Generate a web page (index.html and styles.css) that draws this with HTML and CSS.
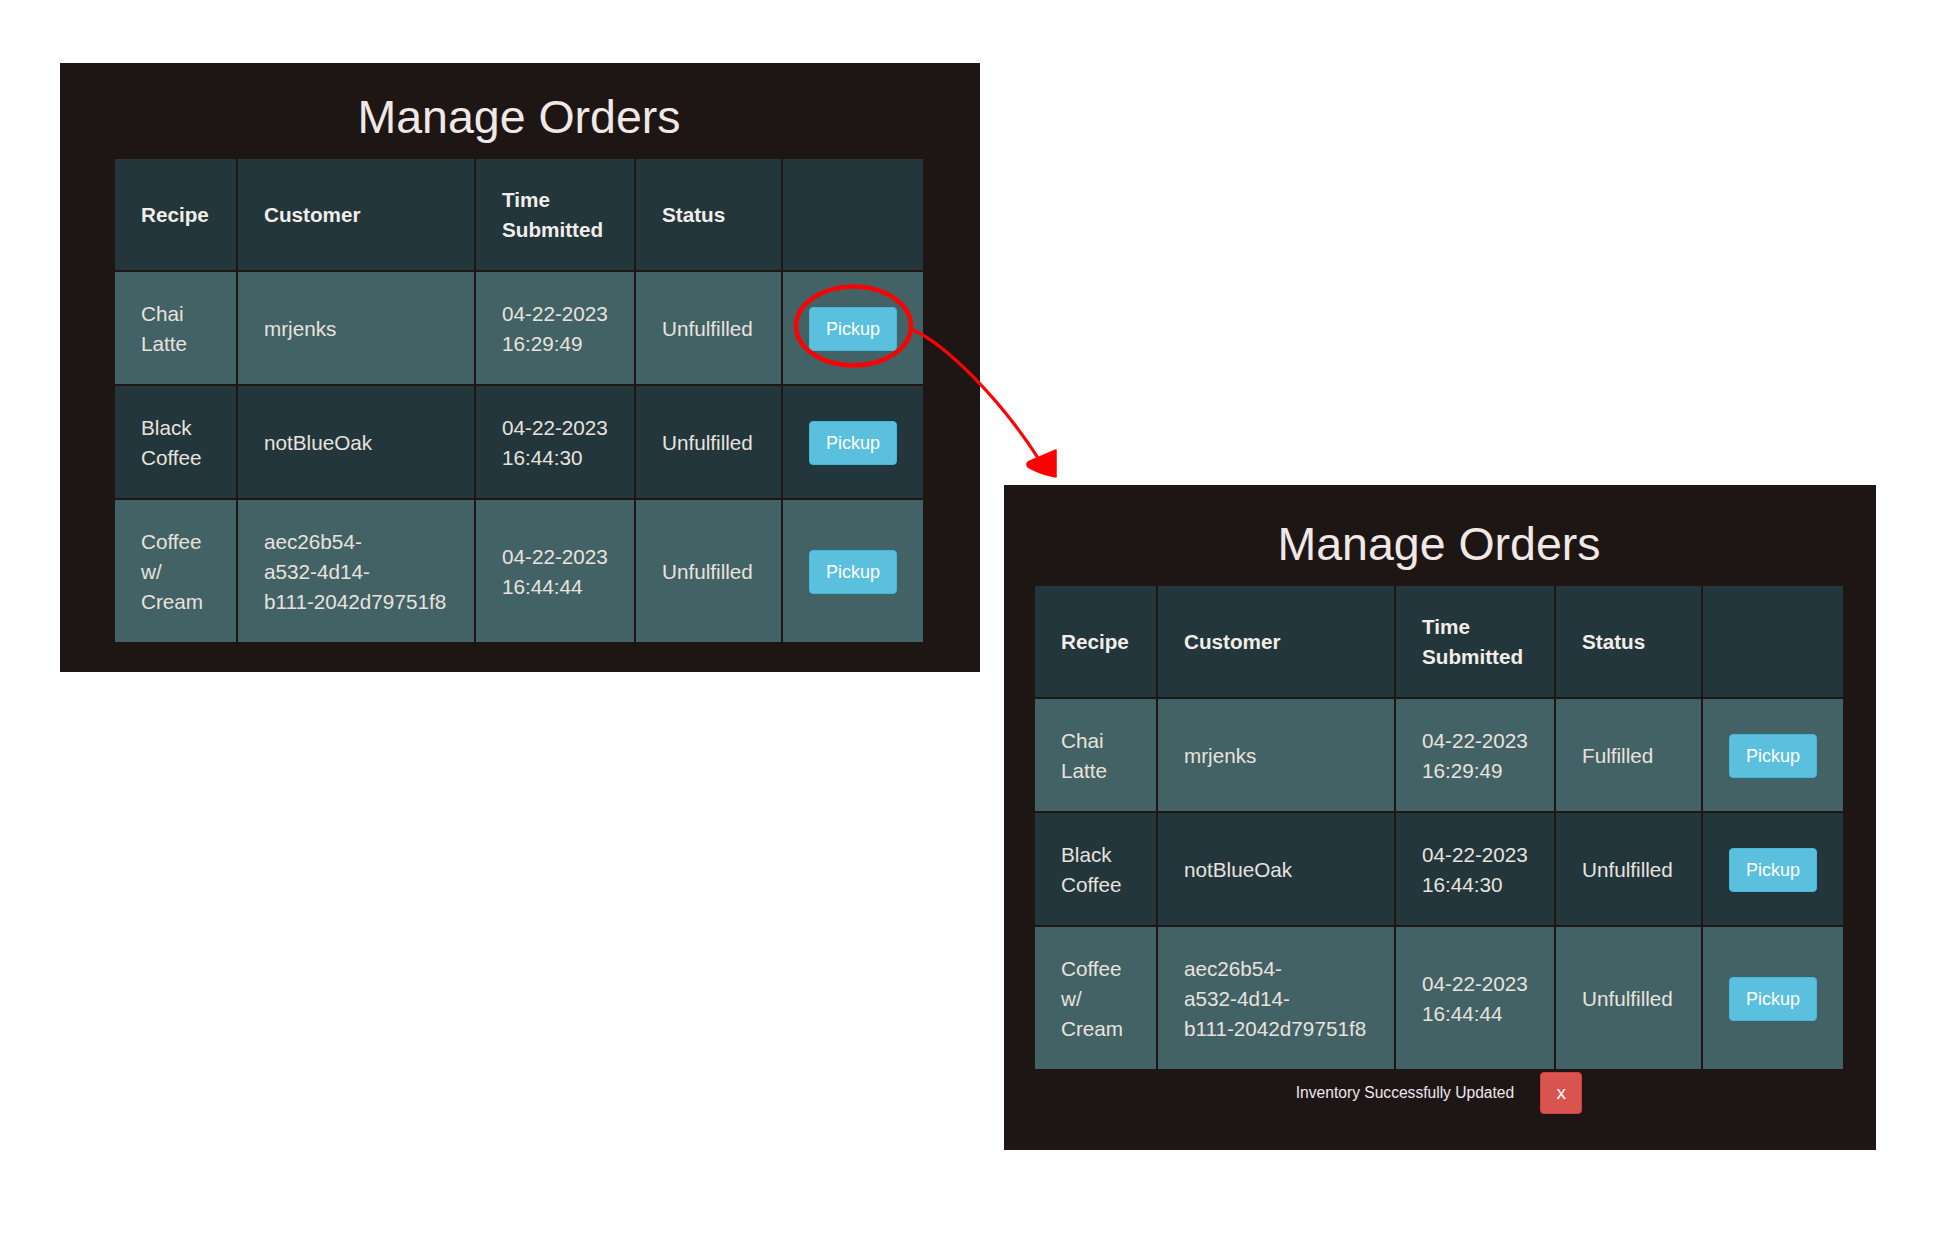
FILE: index.html
```html
<!DOCTYPE html>
<html lang="en">
<head>
<meta charset="utf-8">
<title>Manage Orders</title>
<link rel="stylesheet" href="styles.css">
</head>
<body>
<div class="canvas">
  <section class="panel panel-before">
    <h1 class="title">Manage Orders</h1>
    <table class="orders">
      <colgroup>
        <col class="c-recipe"><col class="c-customer"><col class="c-time"><col class="c-status"><col class="c-action">
      </colgroup>
      <thead>
        <tr><th>Recipe</th><th>Customer</th><th>Time Submitted</th><th>Status</th><th></th></tr>
      </thead>
      <tbody>
        <tr class="light"><td>Chai Latte</td><td>mrjenks</td><td><span class="nobr">04-22-2023</span> <span class="nobr">16:29:49</span></td><td>Unfulfilled</td><td><button class="btn-pickup">Pickup</button></td></tr>
        <tr class="dark"><td>Black Coffee</td><td>notBlueOak</td><td><span class="nobr">04-22-2023</span> <span class="nobr">16:44:30</span></td><td>Unfulfilled</td><td><button class="btn-pickup">Pickup</button></td></tr>
        <tr class="light"><td>Coffee w/ Cream</td><td><span class="nobr">aec26b54-</span><span class="nobr">a532-4d14-</span><span class="nobr">b111-2042d79751f8</span></td><td><span class="nobr">04-22-2023</span> <span class="nobr">16:44:44</span></td><td>Unfulfilled</td><td><button class="btn-pickup">Pickup</button></td></tr>
      </tbody>
    </table>
  </section>

  <section class="panel panel-after">
    <h1 class="title">Manage Orders</h1>
    <table class="orders">
      <colgroup>
        <col class="c-recipe"><col class="c-customer"><col class="c-time"><col class="c-status"><col class="c-action">
      </colgroup>
      <thead>
        <tr><th>Recipe</th><th>Customer</th><th>Time Submitted</th><th>Status</th><th></th></tr>
      </thead>
      <tbody>
        <tr class="light"><td>Chai Latte</td><td>mrjenks</td><td><span class="nobr">04-22-2023</span> <span class="nobr">16:29:49</span></td><td>Fulfilled</td><td><button class="btn-pickup">Pickup</button></td></tr>
        <tr class="dark"><td>Black Coffee</td><td>notBlueOak</td><td><span class="nobr">04-22-2023</span> <span class="nobr">16:44:30</span></td><td>Unfulfilled</td><td><button class="btn-pickup">Pickup</button></td></tr>
        <tr class="light"><td>Coffee w/ Cream</td><td><span class="nobr">aec26b54-</span><span class="nobr">a532-4d14-</span><span class="nobr">b111-2042d79751f8</span></td><td><span class="nobr">04-22-2023</span> <span class="nobr">16:44:44</span></td><td>Unfulfilled</td><td><button class="btn-pickup">Pickup</button></td></tr>
      </tbody>
    </table>
    <div class="alert">
      <span class="alert-text">Inventory Successfully Updated</span>
      <button class="btn-close">x</button>
    </div>
  </section>
</div>

<svg class="annotation" width="1934" height="1237" viewBox="0 0 1934 1237" xmlns="http://www.w3.org/2000/svg">
  <ellipse cx="853.5" cy="326" rx="57.5" ry="39.5" fill="none" stroke="#ff0000" stroke-width="4.5"/>
  <path d="M913,330 C945,344 1000,398 1040,461" fill="none" stroke="#ff0000" stroke-width="3.2"/>
  <path d="M1056,450 L1056,477 Q1040,474 1028,467 Q1025,463 1030,461 Z" fill="#ff0000" stroke="#ff0000" stroke-width="1.5" stroke-linejoin="round"/>
</svg>
</body>
</html>
```

FILE: styles.css
```css
html, body {
  margin: 0;
  padding: 0;
  background: #ffffff;
}

body {
  position: relative;
  width: 1934px;
  height: 1237px;
  overflow: hidden;
  font-family: "Liberation Sans", Arial, Helvetica, sans-serif;
}

.canvas {
  display: flex;
  align-items: flex-start;
  gap: 24px;
  padding: 63px 0 0 60px;
}

.panel {
  box-sizing: border-box;
  background: #1e1615;
}

.panel-before {
  width: 920px;
  padding: 0 57px 30px 55px;
}

.panel-after {
  width: 872px;
  margin-top: 422px;
  padding: 0 33px 36px 31px;
}

.title {
  margin: 0 0 16px 0;
  padding-top: 29px;
  font-size: 46.5px;
  line-height: 51px;
  font-weight: normal;
  text-align: center;
  color: #f0e8e6;
}

.panel-after .title {
  padding-top: 34px;
}

.orders {
  width: 808px;
  table-layout: fixed;
  border-collapse: separate;
  border-spacing: 0;
  font-size: 20.7px;
  line-height: 30px;
  color: #e8e2de;
}

.nobr {
  white-space: nowrap;
}

.c-recipe { width: 121px; }
.c-customer { width: 238px; }
.c-time { width: 160px; }
.c-status { width: 147px; }
.c-action { width: 142px; }

.orders th,
.orders td {
  padding: 27px 26px 25px 26px;
  text-align: left;
  vertical-align: middle;
  border-left: 2px solid #1e1615;
  border-top: 2px solid #1e1615;
}

.orders th:first-child,
.orders td:first-child {
  border-left: none;
}

.orders thead th {
  border-top: none;
  padding-top: 26px;
  padding-bottom: 25px;
  background: #23363b;
  color: #f2ede9;
  font-weight: bold;
}

.orders tr.light td {
  background: #436265;
}

.orders tr.dark td {
  background: #23363b;
}

.btn-pickup {
  display: inline-block;
  margin: 0;
  padding: 7.5px 16px;
  font-family: "Liberation Sans", Arial, Helvetica, sans-serif;
  font-size: 18px;
  line-height: 27px;
  color: #ffffff;
  background: #5bc0de;
  border: 1px solid #46b8da;
  border-radius: 4px;
}

.alert {
  display: flex;
  justify-content: center;
  align-items: center;
  gap: 26px;
  margin-top: 3px;
}

.alert-text {
  font-size: 15.6px;
  color: #ece8ee;
}

.btn-close {
  box-sizing: border-box;
  width: 42px;
  height: 42px;
  margin: 0;
  padding: 0;
  font-family: "Liberation Sans", Arial, Helvetica, sans-serif;
  font-size: 19px;
  line-height: 40px;
  color: #ffffff;
  background: #d9534f;
  border: 1px solid #d43f3a;
  border-radius: 4px;
}

.annotation {
  position: absolute;
  left: 0;
  top: 0;
  pointer-events: none;
}
```
